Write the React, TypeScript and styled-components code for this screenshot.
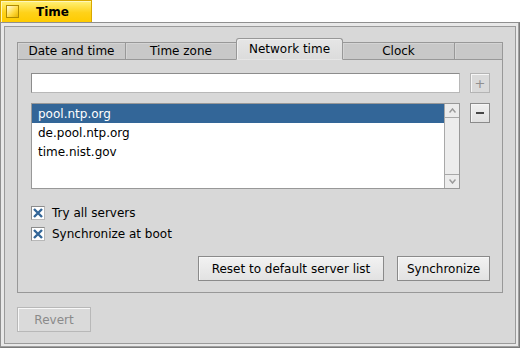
import React from "react";
import styled, { createGlobalStyle, css } from "styled-components";

const Global = createGlobalStyle`
  html, body { margin: 0; padding: 0; background: #ffffff; }
  body { font-family: "DejaVu Sans", "Noto Sans", sans-serif; font-size: 12px; color: #000; }
  * { box-sizing: border-box; }
`;

const Screen = styled.div`
  width: 520px;
  height: 349px;
  display: flex;
  flex-direction: column;
`;

const TitleTab = styled.div`
  width: 92px;
  height: 22px;
  display: flex;
  align-items: center;
  gap: 17px;
  padding-left: 5px;
  border: 1px solid #d8a800;
  border-bottom: none;
  background: linear-gradient(#fff27a, #ffd21a 55%, #ffcb00);
  box-shadow: inset 1px 1px 0 #fff7b8;
`;

const CloseBox = styled.div`
  width: 13px;
  height: 13px;
  border: 1px solid #b08a00;
  background: linear-gradient(135deg, #fffbe0, #ffd83a 60%, #e8b400);
`;

const TitleText = styled.span`
  font-weight: bold;
  font-size: 12px;
`;

const Frame = styled.div`
  width: 520px;
  height: 326px;
  border: 1px solid #8f8f8f;
  border-right-color: #7a7a7a;
  border-bottom-color: #7a7a7a;
  background: #e8e8e8;
  padding: 3px;
  box-shadow: inset -1px -1px 0 #a0a0a0;
`;

const Content = styled.div`
  height: 100%;
  border: 1px solid #9a9a9a;
  background: #d8d8d8;
  padding: 11px 12px 10px 12px;
  display: flex;
  flex-direction: column;
`;

const TabView = styled.div`
  display: flex;
  flex-direction: column;
`;

const TabBar = styled.div`
  display: flex;
  align-items: flex-end;
  height: 22px;
`;

const Tab = styled.div<{ $w?: number; $active?: boolean; $filler?: boolean }>`
  ${(p) => (p.$filler ? "flex: 1;" : `width: ${p.$w}px;`)}
  height: 18px;
  display: flex;
  align-items: center;
  justify-content: center;
  background: #c8c8c8;
  border-top: 1px solid #989898;
  border-left: 1px solid #989898;
  border-bottom: 1px solid #989898;
  box-shadow: inset 1px 1px 0 #d4d4d4;
  &:last-child { border-right: 1px solid #989898; }
  ${(p) =>
    p.$active &&
    css`
      height: 22px;
      background: linear-gradient(#e6e6e6, #dcdcdc);
      border-bottom: 1px solid transparent;
      border-right: 1px solid #989898;
      border-radius: 3px 3px 0 0;
      box-shadow: inset 1px 1px 0 #f0f0f0;
      & + div { border-left: none; }
    `}
`;

const TabBody = styled.div`
  height: 233px;
  border: 1px solid #989898;
  border-top: none;
  padding: 13px 12px 11px 13px;
  display: flex;
  flex-direction: column;
`;

const Row = styled.div<{ $gap?: number }>`
  display: flex;
  align-items: flex-start;
  gap: ${(p) => p.$gap ?? 10}px;
`;

const TextField = styled.div`
  flex: 1;
  height: 20px;
  background: #fff;
  border: 1px solid #8c8c8c;
  border-right-color: #b8b8b8;
  border-bottom-color: #b8b8b8;
`;

const SmallButton = styled.div<{ $disabled?: boolean }>`
  width: 20px;
  height: 20px;
  display: flex;
  align-items: center;
  justify-content: center;
  border: 1px solid ${(p) => (p.$disabled ? "#b4b4b4" : "#8a8a8a")};
  background: ${(p) => (p.$disabled ? "#dadada" : "linear-gradient(#f0f0f0, #e0e0e0)")};
  box-shadow: inset 1px 1px 0 #f6f6f6;
  color: ${(p) => (p.$disabled ? "#8f8f8f" : "#000")};
  font-size: 13px;
  line-height: 1;
`;

const ListBox = styled.div`
  flex: 1;
  height: 86px;
  margin-top: 10px;
  display: flex;
  background: #fff;
  border: 1px solid #989898;
`;

const ListItems = styled.div`
  flex: 1;
  display: flex;
  flex-direction: column;
`;

const ListItem = styled.div<{ $selected?: boolean }>`
  height: 19px;
  padding-left: 6px;
  display: flex;
  align-items: center;
  font-size: 12px;
  ${(p) => p.$selected && css`background: #336698; color: #fff;`}
`;

const ScrollBar = styled.div`
  width: 15px;
  display: flex;
  flex-direction: column;
  background: #ececec;
  border-left: 1px solid #a8a8a8;
`;

const ScrollArrow = styled.div`
  height: 14px;
  display: flex;
  align-items: center;
  justify-content: center;
  background: #ececec;
  border-bottom: 1px solid #a8a8a8;
  &:last-child { border-bottom: none; border-top: 1px solid #a8a8a8; }
`;

const ScrollTrack = styled.div`
  flex: 1;
  background: #ececec;
`;

const MinusWrap = styled.div`
  margin-top: 10px;
`;

const Checks = styled.div`
  margin-top: 17px;
  display: flex;
  flex-direction: column;
  gap: 7px;
`;

const CheckRow = styled.div`
  display: flex;
  align-items: center;
  gap: 7px;
  height: 14px;
`;

const CheckBox = styled.div`
  width: 14px;
  height: 14px;
  display: flex;
  align-items: center;
  justify-content: center;
  background: #fff;
  border: 1px solid #8c8c8c;
  border-right-color: #b8b8b8;
  border-bottom-color: #b8b8b8;
`;

const ButtonRow = styled.div`
  margin-top: auto;
  display: flex;
  justify-content: flex-end;
  gap: 13px;
`;

const Button = styled.div<{ $w: number; $disabled?: boolean }>`
  width: ${(p) => p.$w}px;
  height: 25px;
  display: flex;
  align-items: center;
  justify-content: center;
  border: 1px solid ${(p) => (p.$disabled ? "#b8b8b8" : "#8a8a8a")};
  background: ${(p) => (p.$disabled ? "#dadada" : "linear-gradient(#f2f2f2, #e2e2e2)")};
  box-shadow: inset 1px 1px 0 #f8f8f8;
  color: ${(p) => (p.$disabled ? "#8a8a8a" : "#000")};
`;

const Footer = styled.div`
  margin-top: 14px;
`;

const Arrow = ({ up }: { up?: boolean }) => (
  <svg width="7" height="5" viewBox="0 0 7 5">
    <path d={up ? "M0.5 4.5 L3.5 1 L6.5 4.5" : "M0.5 0.5 L3.5 4 L6.5 0.5"} fill="none" stroke="#9a9a9a" strokeWidth="1.5" />
  </svg>
);

const Cross = () => (
  <svg width="10" height="10" viewBox="0 0 10 10">
    <path d="M1 1 L9 9 M9 1 L1 9" stroke="#336698" strokeWidth="2.4" />
  </svg>
);

const Minus = () => (
  <svg width="10" height="4" viewBox="0 0 10 4">
    <path d="M1 2 H9" stroke="#000" strokeWidth="1.4" />
  </svg>
);

export default function App() {
  return (
    <>
      <Global />
      <Screen>
        <TitleTab>
          <CloseBox />
          <TitleText>Time</TitleText>
        </TitleTab>
        <Frame>
          <Content>
            <TabView>
              <TabBar>
                <Tab $w={108}>Date and time</Tab>
                <Tab $w={111}>Time zone</Tab>
                <Tab $w={107} $active>Network time</Tab>
                <Tab $w={111}>Clock</Tab>
                <Tab $filler />
              </TabBar>
              <TabBody>
                <Row>
                  <TextField />
                  <SmallButton $disabled>+</SmallButton>
                </Row>
                <Row>
                  <ListBox>
                    <ListItems>
                      <ListItem $selected>pool.ntp.org</ListItem>
                      <ListItem>de.pool.ntp.org</ListItem>
                      <ListItem>time.nist.gov</ListItem>
                    </ListItems>
                    <ScrollBar>
                      <ScrollArrow><Arrow up /></ScrollArrow>
                      <ScrollTrack />
                      <ScrollArrow><Arrow /></ScrollArrow>
                    </ScrollBar>
                  </ListBox>
                  <MinusWrap>
                    <SmallButton><Minus /></SmallButton>
                  </MinusWrap>
                </Row>
                <Checks>
                  <CheckRow>
                    <CheckBox><Cross /></CheckBox>
                    <span>Try all servers</span>
                  </CheckRow>
                  <CheckRow>
                    <CheckBox><Cross /></CheckBox>
                    <span>Synchronize at boot</span>
                  </CheckRow>
                </Checks>
                <ButtonRow>
                  <Button $w={186}>Reset to default server list</Button>
                  <Button $w={93}>Synchronize</Button>
                </ButtonRow>
              </TabBody>
            </TabView>
            <Footer>
              <Button $w={74} $disabled>Revert</Button>
            </Footer>
          </Content>
        </Frame>
      </Screen>
    </>
  );
}
